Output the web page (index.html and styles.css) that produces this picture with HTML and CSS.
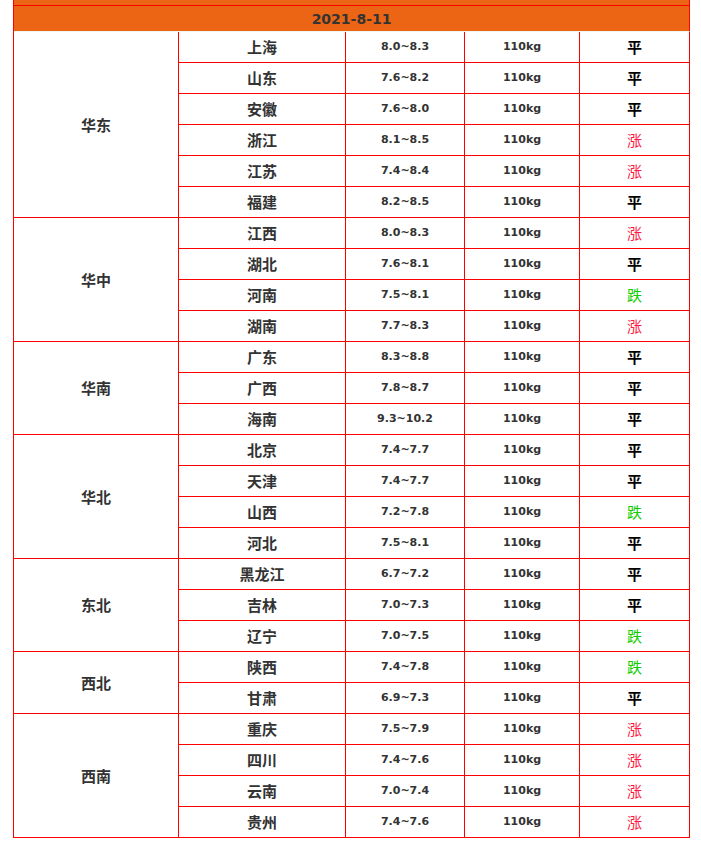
FILE: index.html
```html
<!DOCTYPE html>
<html lang="zh">
<head>
<meta charset="utf-8">
<title>2021-8-11</title>
<link rel="stylesheet" href="styles.css">
</head>
<body>
<table class="price">
<colgroup>
<col class="c1"><col class="c2"><col class="c3"><col class="c4"><col class="c5">
</colgroup>
<tbody>
<tr class="top"><td colspan="5"></td></tr>
<tr class="head"><td colspan="5">2021-8-11</td></tr>

<tr><td class="region" rowspan="6">华东</td><td class="name">上海</td><td class="num">8.0~8.3</td><td class="num">110kg</td><td class="flat">平</td></tr>
<tr><td class="name">山东</td><td class="num">7.6~8.2</td><td class="num">110kg</td><td class="flat">平</td></tr>
<tr><td class="name">安徽</td><td class="num">7.6~8.0</td><td class="num">110kg</td><td class="flat">平</td></tr>
<tr><td class="name">浙江</td><td class="num">8.1~8.5</td><td class="num">110kg</td><td class="up">涨</td></tr>
<tr><td class="name">江苏</td><td class="num">7.4~8.4</td><td class="num">110kg</td><td class="up">涨</td></tr>
<tr><td class="name">福建</td><td class="num">8.2~8.5</td><td class="num">110kg</td><td class="flat">平</td></tr>

<tr><td class="region" rowspan="4">华中</td><td class="name">江西</td><td class="num">8.0~8.3</td><td class="num">110kg</td><td class="up">涨</td></tr>
<tr><td class="name">湖北</td><td class="num">7.6~8.1</td><td class="num">110kg</td><td class="flat">平</td></tr>
<tr><td class="name">河南</td><td class="num">7.5~8.1</td><td class="num">110kg</td><td class="down">跌</td></tr>
<tr><td class="name">湖南</td><td class="num">7.7~8.3</td><td class="num">110kg</td><td class="up">涨</td></tr>

<tr><td class="region" rowspan="3">华南</td><td class="name">广东</td><td class="num">8.3~8.8</td><td class="num">110kg</td><td class="flat">平</td></tr>
<tr><td class="name">广西</td><td class="num">7.8~8.7</td><td class="num">110kg</td><td class="flat">平</td></tr>
<tr><td class="name">海南</td><td class="num">9.3~10.2</td><td class="num">110kg</td><td class="flat">平</td></tr>

<tr><td class="region" rowspan="4">华北</td><td class="name">北京</td><td class="num">7.4~7.7</td><td class="num">110kg</td><td class="flat">平</td></tr>
<tr><td class="name">天津</td><td class="num">7.4~7.7</td><td class="num">110kg</td><td class="flat">平</td></tr>
<tr><td class="name">山西</td><td class="num">7.2~7.8</td><td class="num">110kg</td><td class="down">跌</td></tr>
<tr><td class="name">河北</td><td class="num">7.5~8.1</td><td class="num">110kg</td><td class="flat">平</td></tr>

<tr><td class="region" rowspan="3">东北</td><td class="name">黑龙江</td><td class="num">6.7~7.2</td><td class="num">110kg</td><td class="flat">平</td></tr>
<tr><td class="name">吉林</td><td class="num">7.0~7.3</td><td class="num">110kg</td><td class="flat">平</td></tr>
<tr><td class="name">辽宁</td><td class="num">7.0~7.5</td><td class="num">110kg</td><td class="down">跌</td></tr>

<tr><td class="region" rowspan="2">西北</td><td class="name">陕西</td><td class="num">7.4~7.8</td><td class="num">110kg</td><td class="down">跌</td></tr>
<tr><td class="name">甘肃</td><td class="num">6.9~7.3</td><td class="num">110kg</td><td class="flat">平</td></tr>

<tr><td class="region" rowspan="4">西南</td><td class="name">重庆</td><td class="num">7.5~7.9</td><td class="num">110kg</td><td class="up">涨</td></tr>
<tr><td class="name">四川</td><td class="num">7.4~7.6</td><td class="num">110kg</td><td class="up">涨</td></tr>
<tr><td class="name">云南</td><td class="num">7.0~7.4</td><td class="num">110kg</td><td class="up">涨</td></tr>
<tr><td class="name">贵州</td><td class="num">7.4~7.6</td><td class="num">110kg</td><td class="up">涨</td></tr>
</tbody>
</table>
</body>
</html>
```

FILE: styles.css
```css
html, body {
  margin: 0;
  padding: 0;
  background: #ffffff;
}

body {
  padding-left: 13px;
  font-family: "DejaVu Sans", "Noto Sans CJK SC", sans-serif;
  color: #333333;
}

.price {
  border-collapse: separate;
  border-spacing: 0;
  table-layout: fixed;
  width: 677px;
  border-left: 1px solid #ff0000;
}

.c1 { width: 165px; }
.c2 { width: 167px; }
.c3 { width: 119px; }
.c4 { width: 115px; }
.c5 { width: 110px; }

.price td {
  box-sizing: border-box;
  padding: 0;
  height: 31px;
  border-right: 1px solid #ff0000;
  border-bottom: 1px solid #ff0000;
  text-align: center;
  vertical-align: middle;
  line-height: 16px;
}

.price .top td {
  height: 6px;
  background: #ec6514;
}

.price .head td {
  height: 26px;
  background: #ec6514;
  border-bottom-color: #f4f4f4;
  font-family: "DejaVu Sans", sans-serif;
  font-weight: 700;
  font-size: 14px;
  color: #333333;
}

.region,
.name {
  font-family: "Noto Sans CJK SC", sans-serif;
  font-weight: 700;
  font-size: 15px;
  color: #333333;
}

.num {
  font-family: "DejaVu Sans", sans-serif;
  font-weight: 700;
  font-size: 11px;
  color: #333333;
}

.flat,
.up,
.down {
  font-family: "Noto Sans CJK SC", sans-serif;
  font-size: 15px;
}

.flat {
  font-weight: 700;
  color: #000000;
}

.up {
  font-weight: 400;
  color: #ff1744;
}

.down {
  font-weight: 400;
  color: #11cc00;
}
```
